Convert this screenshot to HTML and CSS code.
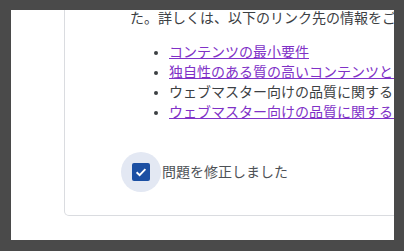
FILE: index.html
```html
<!DOCTYPE html>
<html lang="ja">

<head>
    <meta charset="UTF-8">
    <title>問題を修正しました</title>
    <link rel="stylesheet" href="styles.css">
</head>

<body>
    <div class="frame">
        <div class="card">
            <p>た。詳しくは、以下のリンク先の情報をご確認ください。</p>
            <ul>
                <li><a href="#">コンテンツの最小要件</a></li>
                <li><a href="#">独自性のある質の高いコンテンツとは</a></li>
                <li>ウェブマスター向けの品質に関するガイドライン</li>
                <li><a href="#">ウェブマスター向けの品質に関するガイドライン</a></li>
            </ul>
            <label class="fixed">
                <span class="ripple">
                    <span class="box">
                        <svg width="14" height="14" viewBox="0 0 14 14">
                            <path d="M2.6 7.2 5.6 10.1 11.4 4.2" fill="none" stroke="#fff" stroke-width="1.9" />
                        </svg>
                    </span>
                </span>
                <span class="text">問題を修正しました</span>
            </label>
        </div>
    </div>
</body>

</html>
```

FILE: styles.css
```css
* {
    padding: 0;
    margin: 0;
    list-style: none
}

body {
    background: #4a4a4a;
    font-family: Roboto, "Noto Sans CJK JP", sans-serif;
    font-size: 14px;
    line-height: 20px;
    color: #3c4043;
}

.frame {
    margin: 10px 10px 0 11px;
    height: 230px;
    background: #fff;
    overflow: hidden;
}

.card {
    width: 600px;
    margin: -2px 0 0 53px;
    padding: 0 0 23px 65px;
    border: 1px solid #dadce0;
    border-top: none;
    border-radius: 0 0 0 5px;
}

.card p {
    white-space: nowrap;
}

ul {
    margin-top: 14px;
    padding-left: 39px;
}

li {
    list-style: disc;
    white-space: nowrap;
}

li::marker {
    color: #3c4043;
}

a {
    color: #8031c7;
    text-decoration: underline;
}

.fixed {
    display: flex;
    align-items: center;
    margin: 30px 0 0 -9px;
}

.ripple {
    display: flex;
    align-items: center;
    justify-content: center;
    width: 40px;
    height: 40px;
    border-radius: 50%;
    background: #e3e8f3;
}

.box {
    display: flex;
    align-items: center;
    justify-content: center;
    width: 18px;
    height: 18px;
    border-radius: 2px;
    background: #1b4fa3;
}

.text {
    margin-left: 1px;
    color: #4d5156;
}
```
